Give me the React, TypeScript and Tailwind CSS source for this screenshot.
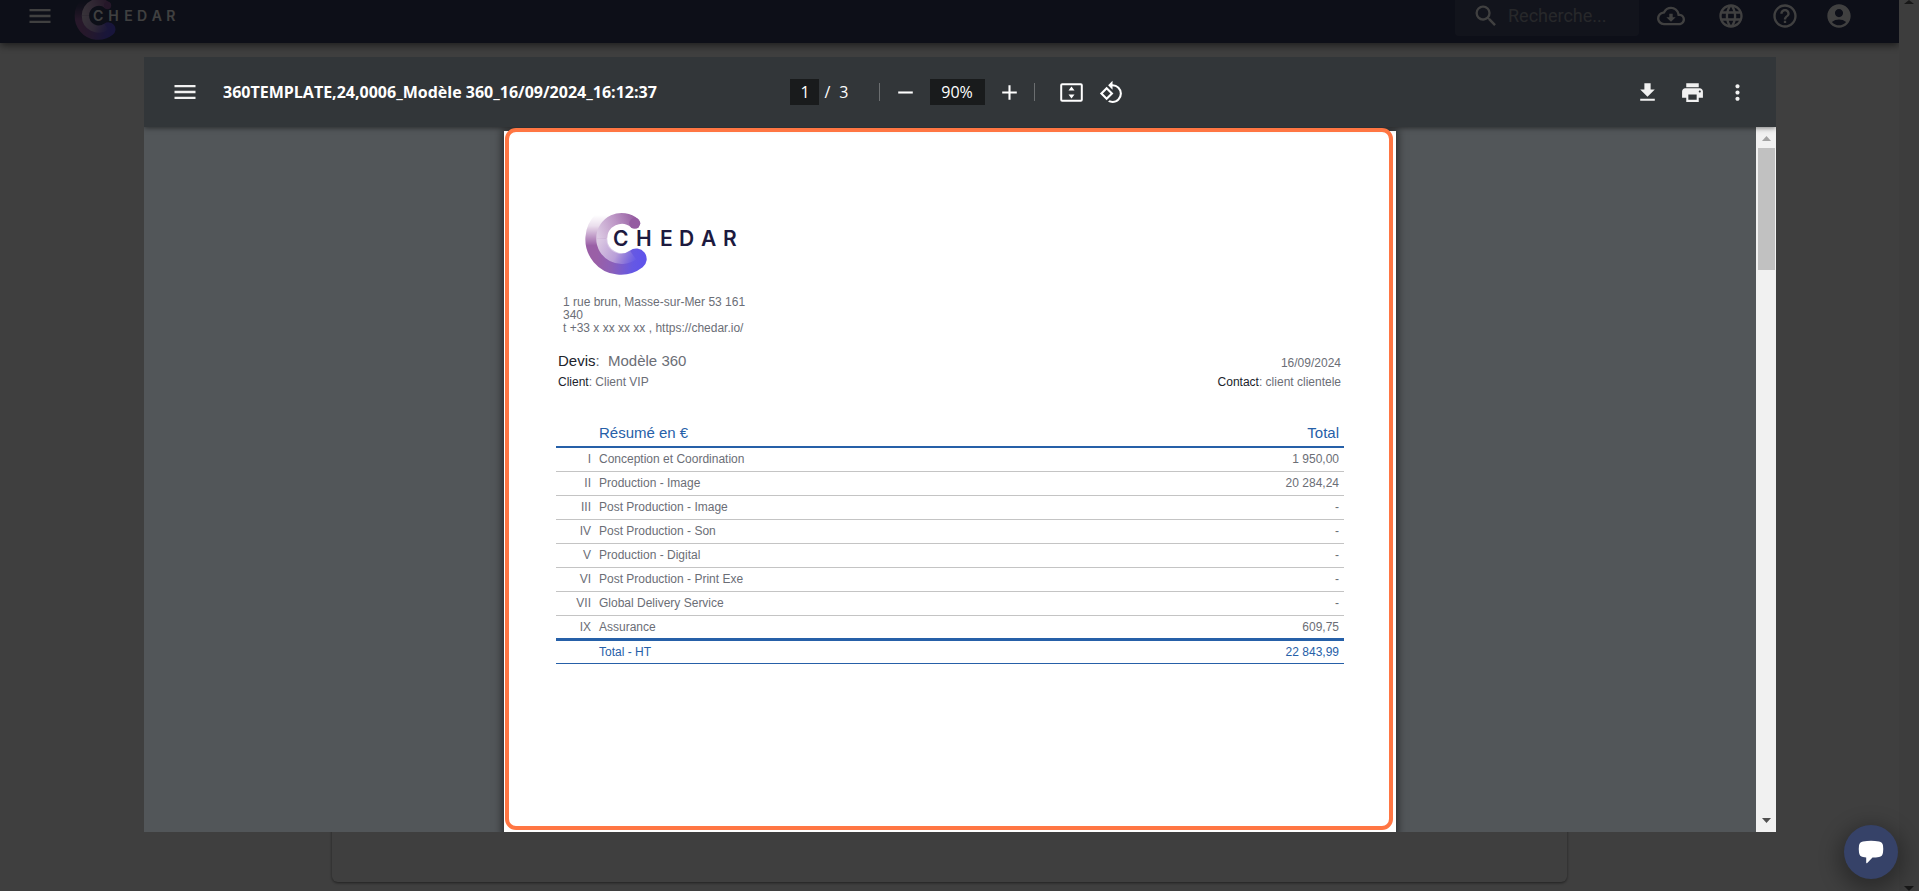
import React from 'react';
import {
  MdAccountCircle,
  MdAdd,
  MdFileDownload,
  MdHelpOutline,
  MdLanguage,
  MdMenu,
  MdMoreVert,
  MdOutlineCloudDownload,
  MdPrint,
  MdRemove,
  MdRotate90DegreesCcw,
  MdSearch,
} from 'react-icons/md';

const rows = [
  { num: 'I', label: 'Conception et Coordination', total: '1 950,00' },
  { num: 'II', label: 'Production - Image', total: '20 284,24' },
  { num: 'III', label: 'Post Production - Image', total: '-' },
  { num: 'IV', label: 'Post Production - Son', total: '-' },
  { num: 'V', label: 'Production - Digital', total: '-' },
  { num: 'VI', label: 'Post Production - Print Exe', total: '-' },
  { num: 'VII', label: 'Global Delivery Service', total: '-' },
  { num: 'IX', label: 'Assurance', total: '609,75' },
];

function Logo({ id, className }: { id: string; className: string }) {
  return (
    <svg viewBox="0 0 152 72" className={className} role="img" aria-label="Chedar">
      <defs>
        <linearGradient id={`${id}-outer`} gradientUnits="userSpaceOnUse" x1="12" y1="50" x2="58" y2="56">
          <stop offset="0" stopColor="#9a5fa6" />
          <stop offset="0.35" stopColor="#8c60b8" />
          <stop offset="0.8" stopColor="#6558e4" />
          <stop offset="1" stopColor="#6054ea" />
        </linearGradient>
        <linearGradient id={`${id}-fade`} gradientUnits="userSpaceOnUse" x1="0" y1="12" x2="0" y2="48">
          <stop offset="0" stopColor="#fff" stopOpacity="0" />
          <stop offset="0.3" stopColor="#fff" stopOpacity="0.2" />
          <stop offset="0.85" stopColor="#fff" stopOpacity="1" />
        </linearGradient>
        <linearGradient id={`${id}-top`} gradientUnits="userSpaceOnUse" x1="14" y1="36" x2="54" y2="20">
          <stop offset="0" stopColor="#dccae3" />
          <stop offset="0.5" stopColor="#bd97c6" />
          <stop offset="1" stopColor="#935a9f" />
        </linearGradient>
        <linearGradient id={`${id}-bottom`} gradientUnits="userSpaceOnUse" x1="14" y1="36" x2="54" y2="56">
          <stop offset="0" stopColor="#dccae3" />
          <stop offset="0.5" stopColor="#c9b4e2" stopOpacity="0.75" />
          <stop offset="1" stopColor="#8f86ee" stopOpacity="0" />
        </linearGradient>
        <mask id={`${id}-mask`} maskUnits="userSpaceOnUse" x="0" y="0" width="152" height="72">
          <rect width="152" height="72" fill={`url(#${id}-fade)`} />
        </mask>
      </defs>
      <g fill="none">
        <g mask={`url(#${id}-mask)`}>
          <path d="M51.2 56A25 25 0 0 1 19 17.8" stroke={`url(#${id}-outer)`} strokeWidth="21" strokeLinecap="round" />
        </g>
        <path d="M16.7 35.5A20 20 0 0 0 48 52" stroke={`url(#${id}-bottom)`} strokeWidth="11" />
        <path d="M49.8 20.3A20 20 0 0 0 16.7 35.6" stroke={`url(#${id}-top)`} strokeWidth="11" />
        <circle cx="49.8" cy="20.3" r="5.5" fill="#955ba2" />
      </g>
      <text
        x="28 51 75 94 116 138"
        y="43"
        fontSize="21"
        fontWeight="600"
        fill="currentColor"
        fontFamily="Inter, 'Liberation Sans', sans-serif"
      >
        CHEDAR
      </text>
    </svg>
  );
}

function FitPageIcon() {
  return (
    <svg width="25" height="25" viewBox="0 0 25 25" fill="none">
      <rect x="2.2" y="4.2" width="20.6" height="16.6" rx="1" stroke="currentColor" strokeWidth="2" />
      <path d="M12.5 6.5l3 4h-6zM12.5 18.5l3-4h-6z" fill="currentColor" />
    </svg>
  );
}

function AppHeader() {
  return (
    <header className="-mt-[11px] flex h-[54px] shrink-0 items-center bg-[#343c60] pl-[26px] pr-[46px] text-white shadow-[0_2px_8px_rgba(0,0,0,0.6)]">
      <button aria-label="Menu">
        <MdMenu size={28} />
      </button>
      <Logo id="nav" className="ml-5 h-12 w-[102px]" />

      <div className="ml-auto flex h-10 w-[184px] items-center gap-2 rounded bg-white/10 pl-[17px]">
        <MdSearch size={28} className="shrink-0" />
        <input
          type="search"
          aria-label="Recherche"
          placeholder="Recherche..."
          className="w-full min-w-0 bg-transparent font-[Roboto,sans-serif] text-lg outline-none placeholder:text-[#9a9ea8]"
        />
      </div>
      <button aria-label="Téléchargements" className="ml-[18px]">
        <MdOutlineCloudDownload size={28} />
      </button>
      <div className="ml-8 flex gap-[26px]">
        <button aria-label="Langue">
          <MdLanguage size={28} />
        </button>
        <button aria-label="Aide">
          <MdHelpOutline size={28} />
        </button>
        <button aria-label="Compte">
          <MdAccountCircle size={28} />
        </button>
      </div>
    </header>
  );
}

function ViewerToolbar() {
  const box = 'h-[26px] bg-[#191b1c] text-center outline-none';

  return (
    <div className="relative z-10 grid h-[70px] shrink-0 grid-cols-[1fr_auto_1fr] items-center bg-[#323639] text-[#f1f1f1] shadow-[0_1px_5px_rgba(0,0,0,0.5)]">
      <div className="flex items-center gap-6 pl-[27px]">
        <button aria-label="Menu latéral">
          <MdMenu size={28} />
        </button>
        <h1 className="text-base font-bold whitespace-nowrap text-white">
          360TEMPLATE,24,0006_Modèle 360_16/09/2024_16:12:37
        </h1>
      </div>

      <div className="flex items-center pr-[6px] text-base text-white">
        <input aria-label="Page" defaultValue="1" className={`${box} w-[29px]`} />
        <span className="ml-[5px] flex gap-[9px]">
          <span>/</span>
          <span>3</span>
        </span>
        <span className="ml-[30px] h-[18px] w-px bg-[#6b6e70]" />
        <button aria-label="Zoom arrière" className="ml-[13px]">
          <MdRemove size={25} />
        </button>
        <input aria-label="Zoom" defaultValue="90%" className={`${box} mx-3 w-[55px]`} />
        <button aria-label="Zoom avant">
          <MdAdd size={25} />
        </button>
        <span className="ml-3 h-[18px] w-px bg-[#6b6e70]" />
        <button aria-label="Ajuster à la page" className="ml-6">
          <FitPageIcon />
        </button>
        <button aria-label="Pivoter" className="ml-[15px]">
          <MdRotate90DegreesCcw size={25} />
        </button>
      </div>

      <div className="flex justify-end gap-5 pr-[26px]">
        <button aria-label="Télécharger">
          <MdFileDownload size={25} />
        </button>
        <button aria-label="Imprimer">
          <MdPrint size={25} />
        </button>
        <button aria-label="Plus">
          <MdMoreVert size={25} />
        </button>
      </div>
    </div>
  );
}

function QuotePage() {
  return (
    <article className="mt-1 min-h-full w-[892px] max-w-full bg-white px-[52px] pt-[72px] font-['Liberation_Sans',Arial,sans-serif] text-xs text-[#6b6e76] shadow-[0_0_8px_2px_rgba(0,0,0,0.5)]">
      <Logo id="doc" className="ml-[29px] h-[72px] w-[152px] text-[#1d1a3f]" />

      <address className="mt-[21px] ml-[7px] w-48 leading-[13px] not-italic">
        1 rue brun, Masse-sur-Mer 53 161 340
        <br />t +33 x xx xx xx , <a href="https://chedar.io/">https://chedar.io/</a>
      </address>

      <div className="mt-4 flex items-end justify-between pr-[3px] pl-[2px]">
        <div>
          <p className="text-[15px] leading-5">
            <span className="text-[#20232b]">Devis</span>: &nbsp;Modèle 360
          </p>
          <p className="leading-[22px]">
            <span className="text-[#20232b]">Client</span>: Client VIP
          </p>
        </div>
        <div className="text-right">
          <p className="leading-4">16/09/2024</p>
          <p className="leading-[22px]">
            <span className="text-[#20232b]">Contact</span>: client clientele
          </p>
        </div>
      </div>

      <table className="mt-[27px] w-full border-collapse">
        <thead>
          <tr className="h-[27px] border-b-2 border-[#2660a8] text-[15px] text-[#2660a8]">
            <th className="w-[35px]" />
            <th className="pl-2 text-left font-normal">Résumé en €</th>
            <th className="pr-[5px] text-right font-normal">Total</th>
          </tr>
        </thead>
        <tbody>
          {rows.map((row) => (
            <tr key={row.num} className="h-6 border-b border-[#c4c4c4] last:border-b-[3px] last:border-[#2660a8]">
              <td className="text-right">{row.num}</td>
              <td className="pl-2">{row.label}</td>
              <td className="pr-[5px] text-right">{row.total}</td>
            </tr>
          ))}
        </tbody>
        <tfoot>
          <tr className="h-6 border-b border-[#2660a8] text-[#2660a8]">
            <td />
            <td className="pl-2">Total - HT</td>
            <td className="pr-[5px] text-right">22 843,99</td>
          </tr>
        </tfoot>
      </table>
    </article>
  );
}

function Scrollbar() {
  return (
    <div className="flex w-5 shrink-0 flex-col items-center bg-[#f1f1f1]">
      <svg width="20" height="21" viewBox="0 0 20 21">
        <path d="M10.500 9l4.500 5h-9z" fill="#a3a3a3" />
      </svg>
      <div className="h-[122px] w-[17px] bg-[#c1c1c1]" />
      <svg width="20" height="21" viewBox="0 0 20 21" className="mt-auto">
        <path d="M6 7h9l-4.500 5z" fill="#505050" />
      </svg>
    </div>
  );
}

export default function App() {
  return (
    <div className="relative flex h-screen overflow-hidden bg-[#fafafa] font-['Open_Sans','Noto_Sans',sans-serif]">
      {/* Application behind the dialog */}
      <div className="flex min-w-0 flex-1 flex-col">
        <AppHeader />
        <main className="flex flex-1 justify-center pt-10 pb-[9px]">
          <div className="w-[65%] rounded-md bg-[#fcfcfc] shadow-[0_1px_3px_rgba(0,0,0,0.5)]" />
        </main>
      </div>
      <div className="flex w-5 shrink-0 flex-col items-center justify-between bg-[#f1f1f1]">
        <svg width="10" height="4" viewBox="0 0 10 4">
          <path d="M5 0l5 4H0z" fill="#606060" />
        </svg>
        <svg width="10" height="5" viewBox="0 0 10 5">
          <path d="M0 0h10L5 5z" fill="#606060" />
        </svg>
      </div>

      {/* PDF dialog */}
      <div className="absolute inset-0 flex bg-black/75 pt-[57px] pr-[143px] pb-[59px] pl-36">
        <div role="dialog" aria-label="Devis" className="flex min-w-0 flex-1 flex-col overflow-hidden bg-[#525659]">
          <ViewerToolbar />
          <div className="relative flex min-h-0 flex-1">
            <div className="flex min-w-0 flex-1 justify-center overflow-hidden">
              <QuotePage />
            </div>
            <Scrollbar />
            {/* Highlight frame round the page */}
            <div className="pointer-events-none absolute inset-y-0 right-5 left-0 z-20 flex justify-center pt-px pr-[2px] pb-[2px]">
              <div className="w-[888px] rounded-[11px] border-4 border-[#ff7643]" />
            </div>
          </div>
        </div>
      </div>

      <button
        aria-label="Ouvrir le chat"
        className="absolute right-[21px] bottom-3 flex size-[54px] items-center justify-center rounded-full bg-[#364268] shadow-[0_6px_20px_6px_rgba(0,0,0,0.3)]"
      >
        <svg width="26" height="24" viewBox="0 0 26 24" fill="#fff">
          <path d="M5 1.500Q13 .2 21 1.500Q24.500 2 25 5.500Q25.500 9 25 12.500Q24.500 16.500 21 17Q18 17.600 14.500 17.600L9 23.200Q8.200 23.600 8.200 22.600V17.400L5 17Q1.500 16.500 1 12.500Q.5 9 1 5.500Q1.500 2 5 1.500z" />
        </svg>
      </button>
    </div>
  );
}
